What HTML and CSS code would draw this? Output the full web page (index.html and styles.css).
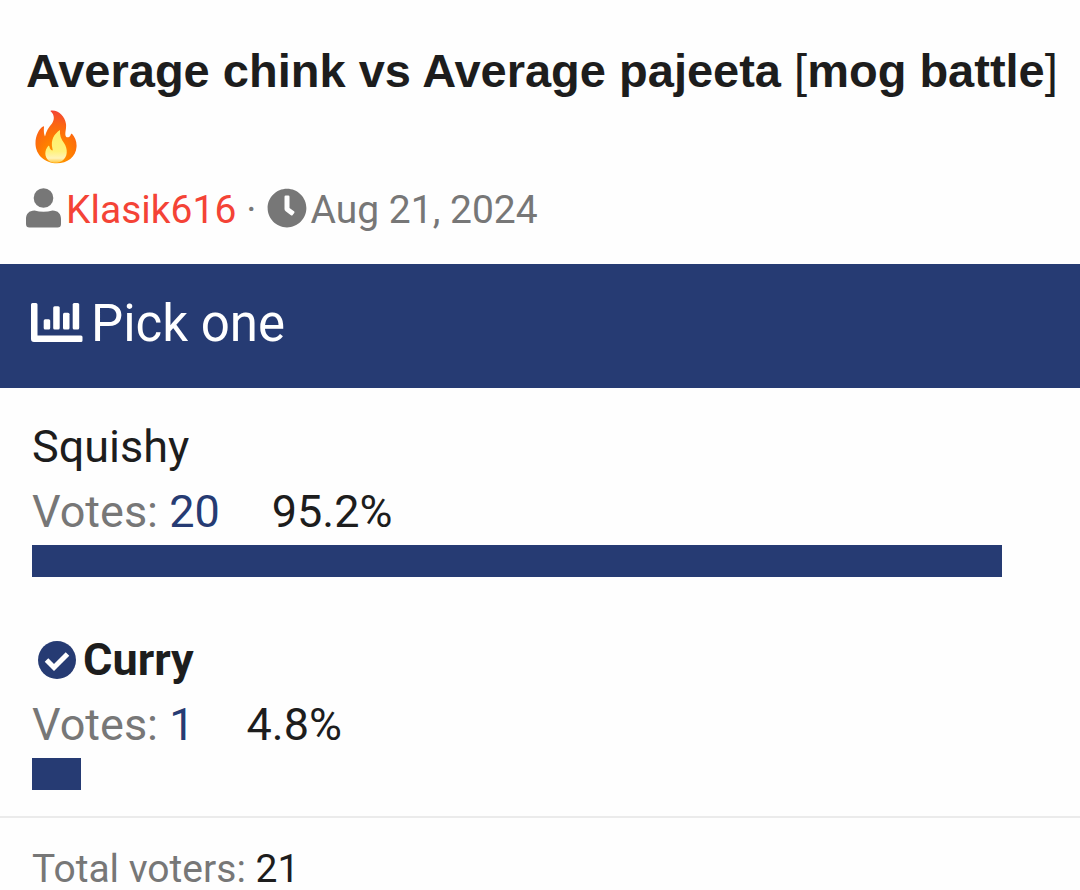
FILE: index.html
```html
<!DOCTYPE html>
<html lang="en">
<head>
<meta charset="utf-8">
<meta name="viewport" content="width=device-width, initial-scale=1">
<title>Poll thread</title>
<link rel="stylesheet" href="styles.css">
</head>
<body>
<header class="thread">
  <h1 class="thread-title">Average chink vs Average pajeeta <span class="bracket">[</span>mog battle<span class="bracket">]</span>
    <svg class="flame" viewBox="0 0 42 54" role="img" aria-label="fire">
      <defs>
        <radialGradient id="flame-outer" cx="0.5" cy="0.92" r="0.95">
          <stop offset="0" stop-color="#ffa000"/>
          <stop offset="0.4" stop-color="#ff7d00"/>
          <stop offset="0.7" stop-color="#fb6514"/>
          <stop offset="1" stop-color="#f24139"/>
        </radialGradient>
        <linearGradient id="flame-inner" x1="0" y1="0" x2="0" y2="1">
          <stop offset="0" stop-color="#ffee68"/>
          <stop offset="0.65" stop-color="#fff27c"/>
          <stop offset="0.86" stop-color="#fff3b8"/>
          <stop offset="1" stop-color="#ffc43a"/>
        </linearGradient>
      </defs>
      <path fill="url(#flame-outer)" d="M16 .6C23-.3 30 6 31 14c.5 5-1.2 8-.5 11.500.5 2.500 4 2.500 5-.2.300-1.200.9-2 1.500-1.500C40 27 42 32 41.500 37 41 47 32 53.300 22 53.300 10 53.300.8 45 .5 34 .3 26 4 19 8 16.500c.800-.4 1.100 0 1 1-.3 3-.2 6.500 1 9C11 21 14 17 17 13.500 20 9 19 4 15.800 1.500c-.4-.4-.3-.8.2-.9z"/>
      <path fill="url(#flame-inner)" d="M25 20C24.500 25 26 29 29 33c4 6 4 14-2 18-4 2.500-10 2.300-13 0-5-4-4.500-11-.8-15 .6-.6 1-.3 1.200.5.400 2 1.200 3.500 3 4 .5 0 .3-1 0-2C15.500 30 19 24 25 20z"/>
    </svg>
  </h1>
  <div class="meta">
    <svg class="icon-user" viewBox="0 0 35 40" aria-hidden="true"><circle cx="17.500" cy="10" r="9.800"/><path d="M8.500 22.500Q17.500 25 26.500 22.500C32 22.500 35 26 35 31V36Q35 39.500 31.500 39.500H3.500Q0 39.500 0 36V31C0 26 3 22.500 8.500 22.500z"/></svg>
    <a class="author" href="#">Klasik616</a>
    <span class="dot">·</span>
    <svg class="icon-clock" viewBox="0 0 512 512" aria-hidden="true"><path d="M256 8C119 8 8 119 8 256s111 248 248 248 248-111 248-248S393 8 256 8zm92.500 313l-20 25a16 16 0 0 1-22.500 2.500l-67-49.700a40 40 0 0 1-15-31.200V112a16 16 0 0 1 16-16h32a16 16 0 0 1 16 16v144l58 42.500a16 16 0 0 1 2.500 22.500z"/></svg>
    <time datetime="2024-08-21">Aug 21, 2024</time>
  </div>
</header>
<main class="poll">
  <h2 class="poll-title">
    <svg class="icon-chart" viewBox="0 0 52 39" aria-hidden="true"><path d="M1.500 0H5Q6.500 0 6.500 1.500V32.500H50Q51.500 32.500 51.500 34V37.500Q51.500 39 50 39H3Q0 39 0 36V1.500Q0 0 1.500 0z"/><rect x="12.700" y="16.200" width="6.500" height="10.200" rx="1.500"/><rect x="22.200" y="3.200" width="6.500" height="23.200" rx="1.500"/><rect x="32" y="9.700" width="6.500" height="16.700" rx="1.500"/><rect x="41.700" y="0" width="6.500" height="26.400" rx="1.500"/></svg>
    Pick one
  </h2>
  <ul class="options">
    <li class="option">
      <h3 class="option-name">Squishy</h3>
      <div class="result"><span class="label">Votes: <a class="count" href="#">20</a></span><span>95.2%</span></div>
      <div class="track"><div class="bar" style="width: 95.24%"></div></div>
    </li>
    <li class="option">
      <h3 class="option-name voted">
        <svg class="icon-check" viewBox="0 0 38 38" role="img" aria-label="Your vote"><circle cx="19" cy="19" r="19"/><path d="M8.500 19L16 26.500 29.500 13"/></svg>
        Curry
      </h3>
      <div class="result"><span class="label">Votes: <a class="count" href="#">1</a></span><span>4.8%</span></div>
      <div class="track"><div class="bar" style="width: 4.76%"></div></div>
    </li>
  </ul>
  <footer class="total"><span class="label">Total voters:</span> 21</footer>
</main>
</body>
</html>
```
FILE: styles.css
```css
* { box-sizing: border-box; }
body {
  margin: 0;
  background: #fefefe;
  color: #1d1d1d;
  font-family: Roboto, "Liberation Sans", sans-serif;
  font-size: 45px;
  line-height: 64px;
}
h1, h2, h3, ul { margin: 0; padding: 0; }
a { color: inherit; text-decoration: none; }
svg { fill: currentColor; flex: none; }

.thread { padding: 38px 20px 26px 26px; }
.thread-title {
  font: bold 47px/66px "Liberation Sans", Arial, sans-serif;
}
.bracket { font-weight: normal; }
.flame {
  width: 42px;
  height: 54px;
  margin-left: 9px;
  vertical-align: -11px;
}
.meta {
  display: flex;
  align-items: center;
  padding-top: 12px;
  color: #777;
  font-size: 39px;
  line-height: 56px;
}
.icon-user { width: 35px; height: 40px; margin: 0 5px 4px 0; }
.author { color: #f44336; }
.dot { margin: 0 10px; }
.icon-clock { width: 40px; height: 40px; margin: 0 4px 4px 0; }

.poll-title {
  display: flex;
  align-items: center;
  gap: 8px;
  padding: 28px 31px 32px;
  background: #263b73;
  color: #fff;
  font-size: 51px;
  font-weight: 400;
  line-height: 64px;
}
.icon-chart { width: 52px; height: 39px; margin-bottom: 4px; }

.options { list-style: none; padding: 27px 29px 26px 32px; }
.option + .option { margin-top: 51px; }
.option-name {
  display: flex;
  align-items: center;
  gap: 7px;
  font-size: 45px;
  font-weight: 400;
  line-height: 64px;
}
.voted { padding-left: 6px; font-weight: 700; }
.icon-check { width: 38px; height: 38px; color: #263b73; }
.icon-check path { fill: none; stroke: #fff; stroke-width: 5; }
.result { display: flex; gap: 52px; line-height: 66px; }
.label { color: #777; }
.count { color: #263b73; }
.track, .bar { height: 32px; }
.bar { background: #263b73; }

.total {
  padding: 30px 32px 0;
  border-top: 2px solid #ebebeb;
  font-size: 39px;
  line-height: 42px;
}
```
